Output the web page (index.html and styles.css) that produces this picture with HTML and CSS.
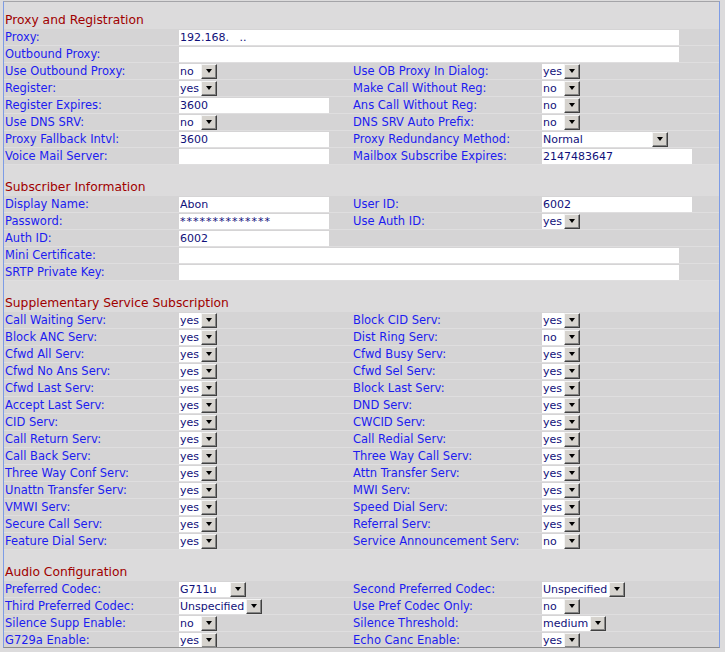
FILE: index.html
```html
<!DOCTYPE html>
<html lang="en">

<head>
    <meta charset="UTF-8">
    <title>SIP Line Settings</title>
    <link rel="stylesheet" href="styles.css">
</head>

<body>
    <div class="frame">
        <div class="sec-title">Proxy and Registration</div>
        <div class="row">
            <span class="lbl">Proxy:</span>
            <input class="fld wide" value="192.168.   ..">
        </div>
        <div class="row">
            <span class="lbl">Outbound Proxy:</span>
            <input class="fld wide" value="">
        </div>
        <div class="row">
            <span class="lbl">Use Outbound Proxy:</span>
            <span class="sel w38"><span class="sel-val">no</span><span class="sel-btn"></span></span>
            <span class="lbl">Use OB Proxy In Dialog:</span>
            <span class="sel w38"><span class="sel-val">yes</span><span class="sel-btn"></span></span>
        </div>
        <div class="row">
            <span class="lbl">Register:</span>
            <span class="sel w38"><span class="sel-val">yes</span><span class="sel-btn"></span></span>
            <span class="lbl">Make Call Without Reg:</span>
            <span class="sel w38"><span class="sel-val">no</span><span class="sel-btn"></span></span>
        </div>
        <div class="row">
            <span class="lbl">Register Expires:</span>
            <input class="fld w150" value="3600">
            <span class="lbl">Ans Call Without Reg:</span>
            <span class="sel w38"><span class="sel-val">no</span><span class="sel-btn"></span></span>
        </div>
        <div class="row">
            <span class="lbl">Use DNS SRV:</span>
            <span class="sel w38"><span class="sel-val">no</span><span class="sel-btn"></span></span>
            <span class="lbl">DNS SRV Auto Prefix:</span>
            <span class="sel w38"><span class="sel-val">no</span><span class="sel-btn"></span></span>
        </div>
        <div class="row">
            <span class="lbl">Proxy Fallback Intvl:</span>
            <input class="fld w150" value="3600">
            <span class="lbl">Proxy Redundancy Method:</span>
            <span class="sel w126"><span class="sel-val">Normal</span><span class="sel-btn"></span></span>
        </div>
        <div class="row">
            <span class="lbl">Voice Mail Server:</span>
            <input class="fld w150" value="">
            <span class="lbl">Mailbox Subscribe Expires:</span>
            <input class="fld w150" value="2147483647">
        </div>

        <div class="gap"></div>
        <div class="sec-title">Subscriber Information</div>
        <div class="row">
            <span class="lbl">Display Name:</span>
            <input class="fld w150" value="Abon">
            <span class="lbl">User ID:</span>
            <input class="fld w150" value="6002">
        </div>
        <div class="row">
            <span class="lbl">Password:</span>
            <input class="fld w150 pw" value="**************">
            <span class="lbl">Use Auth ID:</span>
            <span class="sel w38"><span class="sel-val">yes</span><span class="sel-btn"></span></span>
        </div>
        <div class="row">
            <span class="lbl">Auth ID:</span>
            <input class="fld w150" value="6002">
        </div>
        <div class="row">
            <span class="lbl">Mini Certificate:</span>
            <input class="fld wide" value="">
        </div>
        <div class="row">
            <span class="lbl">SRTP Private Key:</span>
            <input class="fld wide" value="">
        </div>

        <div class="gap"></div>
        <div class="sec-title">Supplementary Service Subscription</div>
        <div class="row">
            <span class="lbl">Call Waiting Serv:</span>
            <span class="sel w38"><span class="sel-val">yes</span><span class="sel-btn"></span></span>
            <span class="lbl">Block CID Serv:</span>
            <span class="sel w38"><span class="sel-val">yes</span><span class="sel-btn"></span></span>
        </div>
        <div class="row">
            <span class="lbl">Block ANC Serv:</span>
            <span class="sel w38"><span class="sel-val">yes</span><span class="sel-btn"></span></span>
            <span class="lbl">Dist Ring Serv:</span>
            <span class="sel w38"><span class="sel-val">no</span><span class="sel-btn"></span></span>
        </div>
        <div class="row">
            <span class="lbl">Cfwd All Serv:</span>
            <span class="sel w38"><span class="sel-val">yes</span><span class="sel-btn"></span></span>
            <span class="lbl">Cfwd Busy Serv:</span>
            <span class="sel w38"><span class="sel-val">yes</span><span class="sel-btn"></span></span>
        </div>
        <div class="row">
            <span class="lbl">Cfwd No Ans Serv:</span>
            <span class="sel w38"><span class="sel-val">yes</span><span class="sel-btn"></span></span>
            <span class="lbl">Cfwd Sel Serv:</span>
            <span class="sel w38"><span class="sel-val">yes</span><span class="sel-btn"></span></span>
        </div>
        <div class="row">
            <span class="lbl">Cfwd Last Serv:</span>
            <span class="sel w38"><span class="sel-val">yes</span><span class="sel-btn"></span></span>
            <span class="lbl">Block Last Serv:</span>
            <span class="sel w38"><span class="sel-val">yes</span><span class="sel-btn"></span></span>
        </div>
        <div class="row">
            <span class="lbl">Accept Last Serv:</span>
            <span class="sel w38"><span class="sel-val">yes</span><span class="sel-btn"></span></span>
            <span class="lbl">DND Serv:</span>
            <span class="sel w38"><span class="sel-val">yes</span><span class="sel-btn"></span></span>
        </div>
        <div class="row">
            <span class="lbl">CID Serv:</span>
            <span class="sel w38"><span class="sel-val">yes</span><span class="sel-btn"></span></span>
            <span class="lbl">CWCID Serv:</span>
            <span class="sel w38"><span class="sel-val">yes</span><span class="sel-btn"></span></span>
        </div>
        <div class="row">
            <span class="lbl">Call Return Serv:</span>
            <span class="sel w38"><span class="sel-val">yes</span><span class="sel-btn"></span></span>
            <span class="lbl">Call Redial Serv:</span>
            <span class="sel w38"><span class="sel-val">yes</span><span class="sel-btn"></span></span>
        </div>
        <div class="row">
            <span class="lbl">Call Back Serv:</span>
            <span class="sel w38"><span class="sel-val">yes</span><span class="sel-btn"></span></span>
            <span class="lbl">Three Way Call Serv:</span>
            <span class="sel w38"><span class="sel-val">yes</span><span class="sel-btn"></span></span>
        </div>
        <div class="row">
            <span class="lbl">Three Way Conf Serv:</span>
            <span class="sel w38"><span class="sel-val">yes</span><span class="sel-btn"></span></span>
            <span class="lbl">Attn Transfer Serv:</span>
            <span class="sel w38"><span class="sel-val">yes</span><span class="sel-btn"></span></span>
        </div>
        <div class="row">
            <span class="lbl">Unattn Transfer Serv:</span>
            <span class="sel w38"><span class="sel-val">yes</span><span class="sel-btn"></span></span>
            <span class="lbl">MWI Serv:</span>
            <span class="sel w38"><span class="sel-val">yes</span><span class="sel-btn"></span></span>
        </div>
        <div class="row">
            <span class="lbl">VMWI Serv:</span>
            <span class="sel w38"><span class="sel-val">yes</span><span class="sel-btn"></span></span>
            <span class="lbl">Speed Dial Serv:</span>
            <span class="sel w38"><span class="sel-val">yes</span><span class="sel-btn"></span></span>
        </div>
        <div class="row">
            <span class="lbl">Secure Call Serv:</span>
            <span class="sel w38"><span class="sel-val">yes</span><span class="sel-btn"></span></span>
            <span class="lbl">Referral Serv:</span>
            <span class="sel w38"><span class="sel-val">yes</span><span class="sel-btn"></span></span>
        </div>
        <div class="row">
            <span class="lbl">Feature Dial Serv:</span>
            <span class="sel w38"><span class="sel-val">yes</span><span class="sel-btn"></span></span>
            <span class="lbl">Service Announcement Serv:</span>
            <span class="sel w38"><span class="sel-val">no</span><span class="sel-btn"></span></span>
        </div>

        <div class="gap"></div>
        <div class="sec-title">Audio Configuration</div>
        <div class="row">
            <span class="lbl">Preferred Codec:</span>
            <span class="sel w67"><span class="sel-val">G711u</span><span class="sel-btn"></span></span>
            <span class="lbl">Second Preferred Codec:</span>
            <span class="sel w83"><span class="sel-val">Unspecified</span><span class="sel-btn"></span></span>
        </div>
        <div class="row">
            <span class="lbl">Third Preferred Codec:</span>
            <span class="sel w83"><span class="sel-val">Unspecified</span><span class="sel-btn"></span></span>
            <span class="lbl">Use Pref Codec Only:</span>
            <span class="sel w38"><span class="sel-val">no</span><span class="sel-btn"></span></span>
        </div>
        <div class="row">
            <span class="lbl">Silence Supp Enable:</span>
            <span class="sel w38"><span class="sel-val">no</span><span class="sel-btn"></span></span>
            <span class="lbl">Silence Threshold:</span>
            <span class="sel w64"><span class="sel-val">medium</span><span class="sel-btn"></span></span>
        </div>
        <div class="row">
            <span class="lbl">G729a Enable:</span>
            <span class="sel w38"><span class="sel-val">yes</span><span class="sel-btn"></span></span>
            <span class="lbl">Echo Canc Enable:</span>
            <span class="sel w38"><span class="sel-val">yes</span><span class="sel-btn"></span></span>
        </div>
    </div>
</body>

</html>
```

FILE: styles.css
```css
body {
    margin: 0;
    background: #dcdbdc;
    font-family: 'DejaVu Sans', Verdana, sans-serif;
    font-size: 11.5px;
}

.frame {
    margin: 1px 0 0 3px;
    width: 715px;
    height: 635px;
    padding-top: 10px;
    border-top: 1px solid #a4a4a8;
    border-left: 1px solid #7d9ce6;
    border-right: 1px solid #7d9ce6;
    border-bottom: 1px solid #8c8c8c;
    overflow: hidden;
}

.sec-title {
    height: 17px;
    line-height: 17px;
    padding-left: 1px;
    color: #a00000;
    font-size: 12.3px;
}

.gap {
    height: 14px;
}

.row {
    display: grid;
    grid-template-columns: 175px 173px 190px 177px;
    align-items: center;
    height: 17px;
    box-sizing: border-box;
    background: #d5d4d5;
    border-bottom: 1px solid #dfdedf;
}

.lbl {
    padding-left: 1px;
    color: #1c1cf0;
    white-space: nowrap;
}

.fld {
    height: 15px;
    padding: 0 1px;
    border: none;
    background: #fff;
    color: #10107a;
    font-family: inherit;
    font-size: 11px;
    box-sizing: border-box;
    outline: none;
}

.pw {
    letter-spacing: 1px;
}

.wide {
    grid-column: 2 / 5;
    width: 500px;
}

.w150 {
    width: 150px;
}

.sel {
    display: inline-flex;
    height: 15px;
    background: #fff;
    color: #10107a;
    font-size: 11px;
    justify-self: start;
}

.sel-val {
    flex: 1;
    padding-left: 1px;
    line-height: 15px;
    white-space: nowrap;
    overflow: hidden;
}

.sel-btn {
    display: flex;
    align-items: center;
    justify-content: center;
    width: 16px;
    height: 15px;
    box-sizing: border-box;
    background: #d6d3ce;
    border: 1px solid;
    border-color: #f4f4f4 #404040 #404040 #f4f4f4;
    box-shadow: inset -1px -1px #858585;
}

.sel-btn::after {
    content: '';
    width: 0;
    height: 0;
    margin: -1px 1px 0 0;
    border-top: 4px solid #000;
    border-left: 3.5px solid transparent;
    border-right: 3.5px solid transparent;
}

.w38 {
    width: 38px;
}

.w64 {
    width: 64px;
}

.w67 {
    width: 67px;
}

.w83 {
    width: 83px;
}

.w126 {
    width: 126px;
}
```
